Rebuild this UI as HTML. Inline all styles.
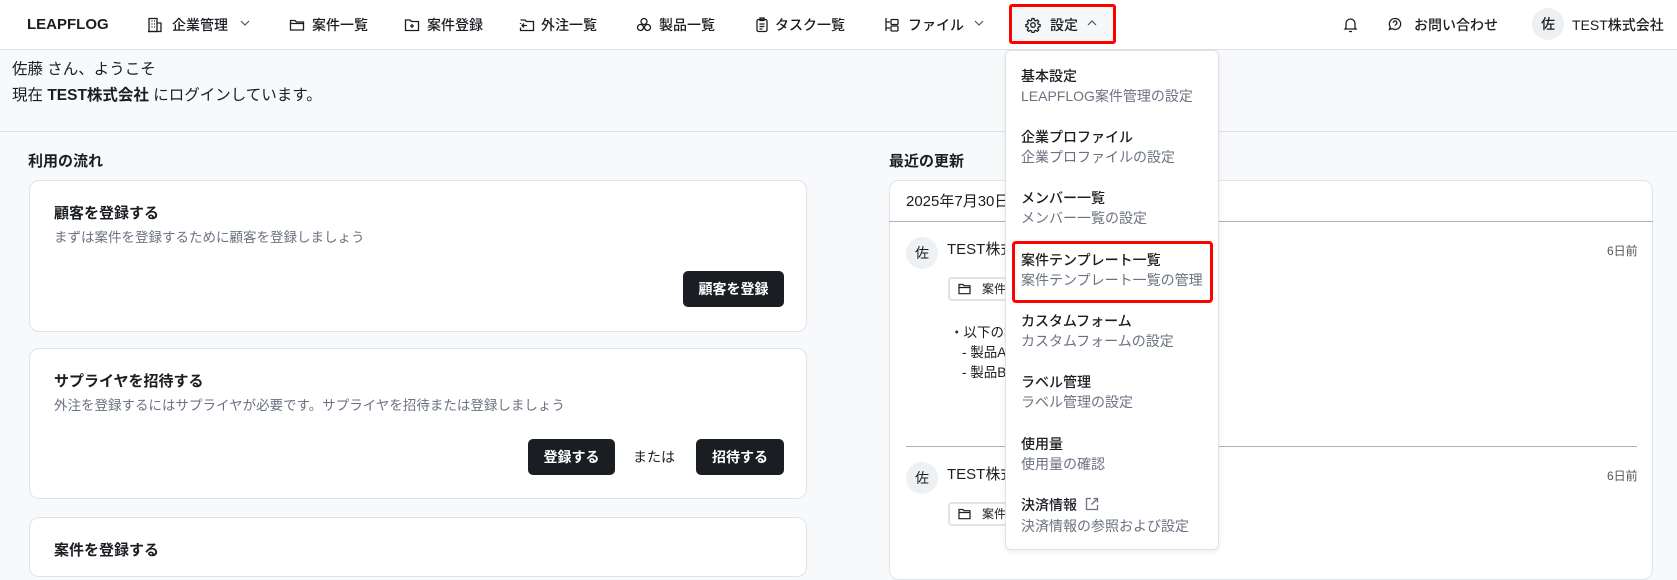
<!DOCTYPE html>
<html><head><meta charset="utf-8"><style>
*{margin:0;padding:0;box-sizing:border-box}
body{width:1677px;height:546px;overflow:hidden;background:#f8f9fa;font-family:"Liberation Sans","Noto Sans CJK JP",sans-serif;color:#1a1d21;font-size:14px;position:relative}
.a{position:absolute;white-space:nowrap}
.hdr{position:absolute;left:0;top:0;width:1677px;height:50px;background:#fff;border-bottom:1px solid #dfe3e8}
.nav{position:absolute;top:15px;font-size:14px;font-weight:500;color:#1a1d21;line-height:20px}
.ic{position:absolute;top:17px}
.card{position:absolute;background:#fff;border:1px solid #dfe3e8;border-radius:10px}
.btn{position:absolute;background:#1a1d21;color:#fff;border-radius:5px;font-size:14px;font-weight:700;text-align:center;line-height:36px;height:36px}
.dd{position:absolute;left:1005px;top:50px;width:214px;height:500px;background:#fff;border:1px solid #dfe3e8;border-radius:6px;box-shadow:0 2px 6px rgba(0,0,0,.08)}
.t{position:absolute;left:15px;font-size:14px;font-weight:500;color:#1a1d21;line-height:18px}
.s{position:absolute;left:15px;font-size:14px;color:#6b7280;line-height:18px}
.tag{position:absolute;left:948px;width:80px;height:24px;border:2px solid #dfe3e8;border-radius:4px;background:#fff;font-size:12px}
</style></head><body>
<div class="hdr"></div>
<div class="a" style="left:27px;top:15px;font-size:15px;font-weight:700;line-height:20px">LEAPFLOG</div>
<svg class="ic" style="left:147px" width="16" height="16" viewBox="0 0 16 16" fill="none" stroke="#1a1d21" stroke-width="1.3"><rect x="2" y="1.5" width="8" height="13"/><path d="M10 6h4v8.5H1M4.5 4h1M7 4h1M4.5 7h1M7 7h1M4.5 10h1M7 10h1"/></svg>
<div class="nav" style="left:172px">企業管理</div>
<svg class="ic" style="left:240px;top:19px" width="10" height="8" viewBox="0 0 10 8" fill="none" stroke="#555" stroke-width="1.2"><path d="M1 2l4 4 4-4"/></svg>
<svg class="ic" style="left:289px" width="16" height="16" viewBox="0 0 16 16" fill="none" stroke="#1a1d21" stroke-width="1.3"><path d="M1.5 3.5h4.5l1.5 1.5h7v8h-13z M1.5 6.5h13"/></svg>
<div class="nav" style="left:312px">案件一覧</div>
<svg class="ic" style="left:404px" width="16" height="16" viewBox="0 0 16 16" fill="none" stroke="#1a1d21" stroke-width="1.3"><path d="M1.5 3h4.5l1.5 1.5h7v9h-13z M8 7v4M6 9h4"/></svg>
<div class="nav" style="left:427px">案件登録</div>
<svg class="ic" style="left:519px" width="16" height="16" viewBox="0 0 16 16" fill="none" stroke="#1a1d21" stroke-width="1.3"><path d="M1.5 3h4.5l1.5 1.5h7v9h-13v-3 M1.5 7v-1 M8 8.5H3m2-2l-2 2 2 2"/></svg>
<div class="nav" style="left:541px">外注一覧</div>
<svg class="ic" style="left:636px" width="16" height="16" viewBox="0 0 16 16" fill="none" stroke="#1a1d21" stroke-width="1.3"><circle cx="8" cy="4.5" r="3"/><circle cx="4.5" cy="10.5" r="3"/><circle cx="11.5" cy="10.5" r="3"/></svg>
<div class="nav" style="left:659px">製品一覧</div>
<svg class="ic" style="left:754px" width="16" height="16" viewBox="0 0 16 16" fill="none" stroke="#1a1d21" stroke-width="1.3"><rect x="3" y="2.5" width="10" height="12" rx="1.5"/><rect x="6" y="1" width="4" height="2.5"/><path d="M5.5 7h5M5.5 9.5h5M5.5 12h3"/></svg>
<div class="nav" style="left:775px">タスク一覧</div>
<svg class="ic" style="left:884px" width="16" height="16" viewBox="0 0 16 16" fill="none" stroke="#1a1d21" stroke-width="1.3"><path d="M2 1v13M2 5h4M2 11h4"/><rect x="7" y="2.5" width="7" height="5" rx="1"/><rect x="7" y="9" width="7" height="5" rx="1"/></svg>
<div class="nav" style="left:908px">ファイル</div>
<svg class="ic" style="left:974px;top:19px" width="10" height="8" viewBox="0 0 10 8" fill="none" stroke="#555" stroke-width="1.2"><path d="M1 2l4 4 4-4"/></svg>
<div class="a" style="left:1009px;top:4px;width:107px;height:40px;border:3px solid #f00;border-radius:3px;background:#f6f7f9"></div>
<svg class="ic" style="left:1025px" width="16" height="16" viewBox="0 0 16 16" fill="none" stroke="#1a1d21" stroke-width="1.3"><circle cx="8" cy="8" r="2.3"/><path d="M7 1.5h2l.4 1.8 1.3.6 1.6-1 1.4 1.4-1 1.6.6 1.3 1.8.4v2l-1.8.4-.6 1.3 1 1.6-1.4 1.4-1.6-1-1.3.6-.4 1.8h-2l-.4-1.8-1.3-.6-1.6 1-1.4-1.4 1-1.6-.6-1.3-1.8-.4v-2l1.8-.4.6-1.3-1-1.6 1.4-1.4 1.6 1 1.3-.6z"/></svg>
<div class="nav" style="left:1050px">設定</div>
<svg class="ic" style="left:1087px;top:19px" width="10" height="8" viewBox="0 0 10 8" fill="none" stroke="#555" stroke-width="1.2"><path d="M1 6l4-4 4 4"/></svg>
<svg class="ic" style="left:1343px" width="15" height="16" viewBox="0 0 15 16" fill="none" stroke="#1a1d21" stroke-width="1.3"><path d="M3 11V6.5a4.5 4.5 0 019 0V11l1 1H2z M6 14.5h3"/></svg>
<svg class="ic" style="left:1388px" width="14" height="15" viewBox="0 0 14 15" fill="none" stroke="#1a1d21" stroke-width="1.3"><path d="M7 1.5a5.5 5.5 0 11-3 10l-2.5 1 .8-2.5A5.5 5.5 0 017 1.5z M5.3 5.8a1.8 1.8 0 113 1.3c-.8.5-1.3.8-1.3 1.7M7 10.5v.3"/></svg>
<div class="nav" style="left:1414px">お問い合わせ</div>
<div class="a" style="left:1532px;top:8px;width:32px;height:32px;border-radius:50%;background:#eef1f4;text-align:center;line-height:32px;font-size:14px;font-weight:500">佐</div>
<div class="nav" style="left:1572px">TEST株式会社</div>

<div class="a" style="left:12px;top:60px;font-size:15.5px;line-height:20px">佐藤 さん、ようこそ</div>
<div class="a" style="left:12px;top:86px;font-size:15.5px;line-height:20px">現在 <b>TEST株式会社</b> にログインしています。</div>
<div class="a" style="left:0;top:131px;width:1677px;height:1px;background:#dfe3e8"></div>

<div class="a" style="left:28px;top:152px;font-size:15px;font-weight:700;line-height:20px">利用の流れ</div>
<div class="card" style="left:29px;top:180px;width:778px;height:152px"></div>
<div class="a" style="left:54px;top:203px;font-size:15px;font-weight:700;line-height:22px">顧客を登録する</div>
<div class="a" style="left:54px;top:229px;font-size:13.5px;color:#6b7280;line-height:18px">まずは案件を登録するために顧客を登録しましょう</div>
<div class="btn" style="left:683px;top:271px;width:101px">顧客を登録</div>
<div class="card" style="left:29px;top:348px;width:778px;height:151px"></div>
<div class="a" style="left:54px;top:371px;font-size:15px;font-weight:700;line-height:22px">サプライヤを招待する</div>
<div class="a" style="left:54px;top:397px;font-size:13.5px;color:#6b7280;line-height:18px">外注を登録するにはサプライヤが必要です。サプライヤを招待または登録しましょう</div>
<div class="btn" style="left:528px;top:439px;width:87px">登録する</div>
<div class="a" style="left:633px;top:447px;font-size:14px;line-height:20px">または</div>
<div class="btn" style="left:696px;top:439px;width:88px">招待する</div>
<div class="card" style="left:29px;top:517px;width:778px;height:60px"></div>
<div class="a" style="left:54px;top:540px;font-size:15px;font-weight:700;line-height:22px">案件を登録する</div>

<div class="a" style="left:889px;top:152px;font-size:15px;font-weight:700;line-height:20px">最近の更新</div>
<div class="card" style="left:889px;top:180px;width:764px;height:400px"></div>
<div class="a" style="left:889px;top:221px;width:764px;height:1px;background:#aab2bd"></div>
<div class="a" style="left:906px;top:192px;font-size:15px;line-height:20px">2025年7月30日</div>
<div class="a" style="left:906px;top:237px;width:32px;height:32px;border-radius:50%;background:#eef1f4;text-align:center;line-height:32px;font-size:14px">佐</div>
<div class="a" style="left:947px;top:240px;font-size:15px;line-height:20px">TEST株式会社</div>
<div class="a" style="left:1607px;top:243px;font-size:12px;color:#555;line-height:16px">6日前</div>
<div class="tag" style="top:277px"></div>
<svg class="a" style="left:958px;top:283px" width="13" height="12" viewBox="0 0 13 12" fill="none" stroke="#1a1d21" stroke-width="1.2"><path d="M1 1.5h4l1 1.2h6v8H1z M1 4.5h11"/></svg>
<div class="a" style="left:982px;top:281px;font-size:12px;line-height:16px">案件</div>
<div class="a" style="left:950px;top:324px;font-size:13.5px;line-height:18px">・以下の製品</div>
<div class="a" style="left:962px;top:344px;font-size:13.5px;line-height:18px">- 製品A</div>
<div class="a" style="left:962px;top:364px;font-size:13.5px;line-height:18px">- 製品B</div>
<div class="a" style="left:906px;top:446px;width:731px;height:1px;background:#aab2bd"></div>
<div class="a" style="left:906px;top:462px;width:32px;height:32px;border-radius:50%;background:#eef1f4;text-align:center;line-height:32px;font-size:14px">佐</div>
<div class="a" style="left:947px;top:465px;font-size:15px;line-height:20px">TEST株式会社</div>
<div class="a" style="left:1607px;top:468px;font-size:12px;color:#555;line-height:16px">6日前</div>
<div class="tag" style="top:502px"></div>
<svg class="a" style="left:958px;top:508px" width="13" height="12" viewBox="0 0 13 12" fill="none" stroke="#1a1d21" stroke-width="1.2"><path d="M1 1.5h4l1 1.2h6v8H1z M1 4.5h11"/></svg>
<div class="a" style="left:982px;top:506px;font-size:12px;line-height:16px">案件</div>

<div class="dd">
<div class="t" style="top:16px">基本設定</div><div class="s" style="top:36px">LEAPFLOG案件管理の設定</div>
<div class="t" style="top:77px">企業プロファイル</div><div class="s" style="top:97px">企業プロファイルの設定</div>
<div class="t" style="top:138px">メンバー一覧</div><div class="s" style="top:158px">メンバー一覧の設定</div>
<div style="position:absolute;left:6px;top:190px;width:201px;height:62px;border:3px solid #f00;border-radius:4px"></div>
<div class="t" style="top:200px">案件テンプレート一覧</div><div class="s" style="top:220px">案件テンプレート一覧の管理</div>
<div class="t" style="top:261px">カスタムフォーム</div><div class="s" style="top:281px">カスタムフォームの設定</div>
<div class="t" style="top:322px">ラベル管理</div><div class="s" style="top:342px">ラベル管理の設定</div>
<div class="t" style="top:384px">使用量</div><div class="s" style="top:404px">使用量の確認</div>
<div class="t" style="top:445px">決済情報 <svg width="14" height="14" viewBox="0 0 14 14" fill="none" stroke="#6b7280" stroke-width="1.3" style="vertical-align:-1px;margin-left:4px"><path d="M6 1.5H1.5v11h11V8M8.5 1.5h4v4M12.5 1.5L6.5 7.5"/></svg></div><div class="s" style="top:466px">決済情報の参照および設定</div>
</div>
</body></html>
